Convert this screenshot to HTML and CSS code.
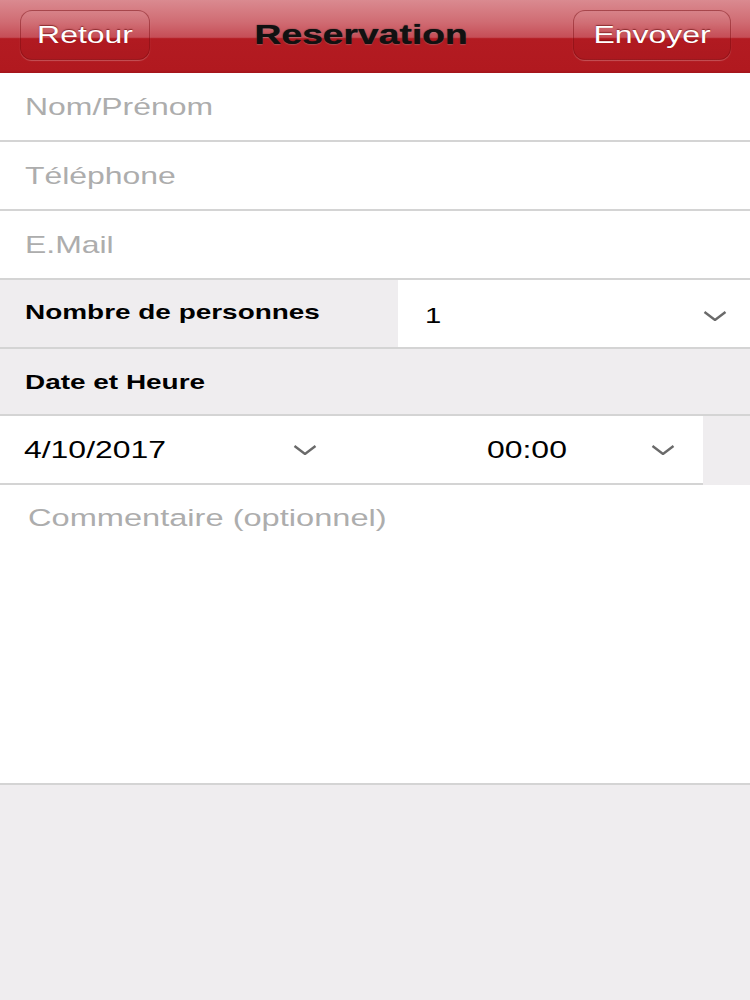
FILE: index.html
```html
<!DOCTYPE html>
<html lang="fr">
<head>
    <meta charset="UTF-8">
    <meta name="viewport" content="width=device-width, initial-scale=1.0">
    <title>Reservation</title>
    <link rel="stylesheet" href="styles.css">
</head>
<body>
    <div class="navbar">
        <div class="nav-btn back"><span class="wide">Retour</span></div>
        <div class="nav-title"><span class="wide">Reservation</span></div>
        <div class="nav-btn send"><span class="wide">Envoyer</span></div>
    </div>

    <div class="field"><span class="wide">Nom/Prénom</span></div>
    <div class="field"><span class="wide">Téléphone</span></div>
    <div class="field"><span class="wide">E.Mail</span></div>

    <div class="persons">
        <div class="persons-label"><span class="wide">Nombre de personnes</span></div>
        <div class="persons-select">
            <span class="wide">1</span>
            <svg class="chevron" viewBox="0 0 24 10"><polyline points="1.5,1 12,9 22.5,1"/></svg>
        </div>
    </div>

    <div class="section-label"><span class="wide">Date et Heure</span></div>

    <div class="datetime">
        <div class="dt-cell date">
            <span class="wide">4/10/2017</span>
            <svg class="chevron" viewBox="0 0 24 10"><polyline points="1.5,1 12,9 22.5,1"/></svg>
        </div>
        <div class="dt-cell time">
            <span class="wide">00:00</span>
            <svg class="chevron" viewBox="0 0 24 10"><polyline points="1.5,1 12,9 22.5,1"/></svg>
        </div>
    </div>

    <div class="comment"><span class="wide">Commentaire (optionnel)</span></div>
</body>
</html>
```

FILE: styles.css
```css
body {
    margin: 0;
    background: #efedef;
    font-family: "Liberation Sans", Arial, sans-serif;
    color: #000;
}

/* the original is an iPhone capture stretched sideways */
.wide {
    display: inline-block;
    transform: scaleX(1.33);
    transform-origin: left center;
    white-space: nowrap;
}

.navbar {
    display: flex;
    justify-content: space-between;
    align-items: flex-start;
    height: 73px;
    box-sizing: border-box;
    padding: 10px 19px 0 20px;
    background: linear-gradient(to bottom, #da8a90 0%, #d06c73 30%, #c64e57 51%, #b31b22 53%, #b1191f 96%, #a3141a 100%);
}

.nav-btn {
    display: flex;
    justify-content: center;
    align-items: center;
    height: 50px;
    box-sizing: border-box;
    border: 1px solid rgba(120, 10, 16, 0.45);
    border-radius: 12px;
    background: linear-gradient(to bottom, rgba(255, 255, 255, 0.06), rgba(255, 255, 255, 0) 50%, rgba(0, 0, 0, 0.03));
    box-shadow: 0 1px 1px rgba(255, 255, 255, 0.25);
    color: #fff;
    font-size: 24px;
    text-shadow: 0 -1px 1px rgba(90, 0, 0, 0.6);
}

.nav-btn .wide,
.nav-title .wide {
    transform-origin: center center;
}

.back {
    width: 130px;
}

.send {
    width: 158px;
}

.nav-title {
    display: flex;
    align-items: center;
    height: 50px;
    font-size: 28px;
    font-weight: bold;
    color: #111;
    text-shadow: 0 0 1px #111, 0 1px 1px rgba(255, 255, 255, 0.25);
}

.field {
    display: flex;
    align-items: center;
    height: 67px;
    padding-left: 25px;
    background: #fff;
    border-bottom: 2px solid #d4d4d4;
    color: #adadad;
    font-size: 24px;
}

.persons {
    display: flex;
    height: 67px;
    border-bottom: 2px solid #d4d4d4;
}

.persons-label {
    display: flex;
    align-items: center;
    width: 398px;
    padding: 0 0 4px 25px;
    box-sizing: border-box;
    font-size: 21px;
    font-weight: bold;
}

.persons-select {
    flex: 1;
    display: flex;
    justify-content: space-between;
    align-items: center;
    padding: 4px 23px 0 27px;
    background: #fff;
    font-size: 22px;
}

.section-label {
    display: flex;
    align-items: center;
    height: 65px;
    padding-left: 25px;
    border-bottom: 2px solid #d4d4d4;
    font-size: 21px;
    font-weight: bold;
}

.datetime {
    display: flex;
    width: 703px;
    height: 67px;
    background: #fff;
    border-bottom: 2px solid #d4d4d4;
}

.dt-cell {
    display: flex;
    justify-content: space-between;
    align-items: center;
    box-sizing: border-box;
    font-size: 24px;
}

.date {
    width: 340px;
    padding: 0 23px 0 24px;
}

.time {
    flex: 1;
    padding: 0 28px 0 147px;
}

.chevron {
    width: 24px;
    height: 10px;
    fill: none;
    stroke: #6a6a6a;
    stroke-width: 2.4;
}

.comment {
    height: 279px;
    padding: 19px 0 0 28px;
    background: #fff;
    border-bottom: 2px solid #d4d4d4;
    color: #adadad;
    font-size: 24.5px;
    line-height: 28px;
}
```
